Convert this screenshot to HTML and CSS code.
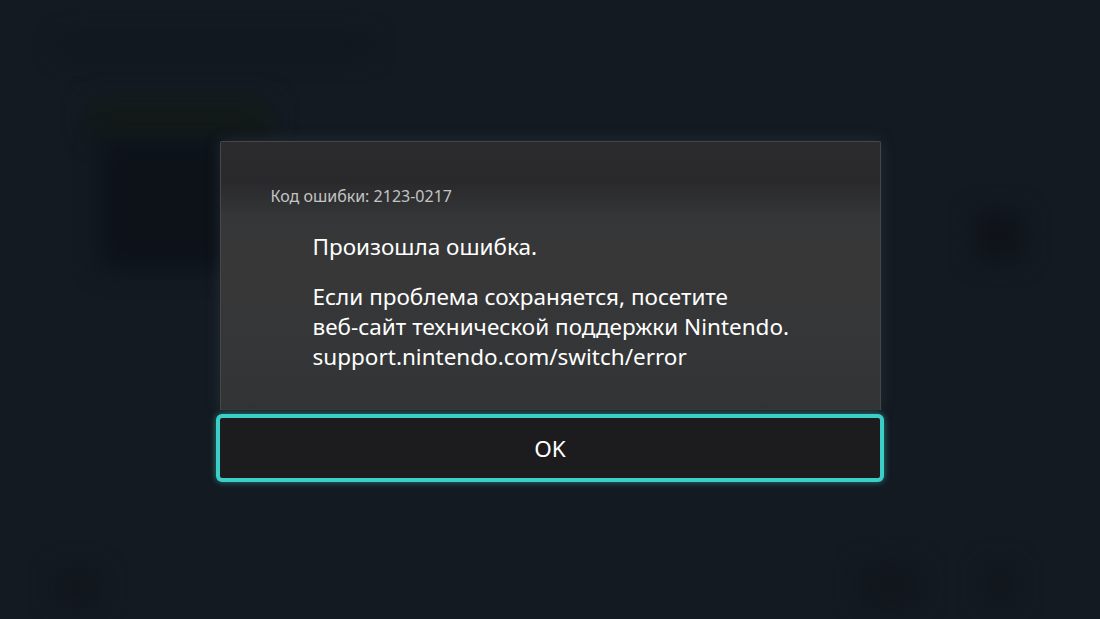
FILE: index.html
```html
<!DOCTYPE html>
<html lang="ru">
<head>
    <meta charset="UTF-8">
    <meta name="viewport" content="width=device-width, initial-scale=1.0">
    <title>Ошибка</title>
    <link rel="stylesheet" href="styles.css">
</head>
<body>
    <div class="backdrop">
        <div class="blur blur-title"></div>
        <div class="blur blur-tag"></div>
        <div class="blur blur-tile"></div>
        <div class="blur blur-side"></div>
        <div class="blur blur-left-btn"></div>
        <div class="blur blur-right-btn"></div>
        <div class="blur blur-right-btn2"></div>
    </div>

    <div class="screen">
        <div class="dialog">
            <div class="dialog-head">
                <p class="error-code">Код ошибки: 2123-0217</p>
            </div>
            <div class="dialog-body">
                <p class="title">Произошла ошибка.</p>
                <p class="message">Если проблема сохраняется, посетите<br>веб-сайт технической поддержки Nintendo.<br>support.nintendo.com/switch/error</p>
            </div>
        </div>
        <button class="ok-button">OK</button>
    </div>
</body>
</html>
```

FILE: styles.css
```css
* {
    box-sizing: border-box;
    margin: 0;
    padding: 0;
}

html, body {
    height: 100%;
}

body {
    font-family: 'Noto Sans', 'Open Sans', sans-serif;
    background-color: #131a22;
    color: #fff;
    overflow: hidden;
    position: relative;
}

/* blurred home screen behind the dialog */
.backdrop {
    position: absolute;
    inset: 0;
}

.blur {
    position: absolute;
    filter: blur(12px);
}

.blur-title {
    left: 60px;
    top: 38px;
    width: 310px;
    height: 16px;
    background-color: #10161d;
}

.blur-tag {
    left: 90px;
    top: 100px;
    width: 180px;
    height: 36px;
    background-color: #131a17;
}

.blur-tile {
    left: 100px;
    top: 140px;
    width: 140px;
    height: 130px;
    background-color: #0d1219;
}

.blur-side {
    left: 975px;
    top: 212px;
    width: 48px;
    height: 48px;
    background-color: #0f1318;
}

.blur-left-btn {
    left: 55px;
    top: 570px;
    width: 45px;
    height: 35px;
    background-color: #11161b;
}

.blur-right-btn {
    left: 860px;
    top: 565px;
    width: 60px;
    height: 40px;
    background-color: #11161b;
}

.blur-right-btn2 {
    left: 985px;
    top: 565px;
    width: 30px;
    height: 40px;
    background-color: #11161b;
}

.screen {
    position: relative;
    padding-top: 141px;
    display: flex;
    flex-direction: column;
    align-items: center;
}

.dialog {
    width: 661px;
    background-color: #353637;
    border: 1px solid #45474a;
    border-bottom: none;
    border-radius: 2px 2px 0 0;
    box-shadow: 0 0 14px rgba(70, 80, 90, 0.35);
}

.dialog-head {
    height: 70px;
    padding: 44px 0 0 50px;
    background: linear-gradient(#2b2b2d, #29292b 55%, #333435);
}

.error-code {
    font-size: 16px;
    line-height: 20px;
    color: #c4c4c4;
}

.dialog-body {
    padding: 20px 0 38px 92px;
    background: linear-gradient(#353637, #373738 25%, #353637 70%, #323334);
}

.title {
    font-size: 22.5px;
    line-height: 30px;
    margin-bottom: 20px;
}

.message {
    font-size: 22.5px;
    line-height: 30px;
}

.ok-button {
    margin-top: 4px;
    width: 668px;
    height: 68px;
    background-color: #1c1c1e;
    border: 4px solid #3bcfc7;
    border-radius: 6px;
    box-shadow: 0 0 6px rgba(59, 207, 199, 0.55);
    color: #fff;
    font-family: 'Noto Sans', 'Open Sans', sans-serif;
    font-size: 22.5px;
    cursor: pointer;
}
```
